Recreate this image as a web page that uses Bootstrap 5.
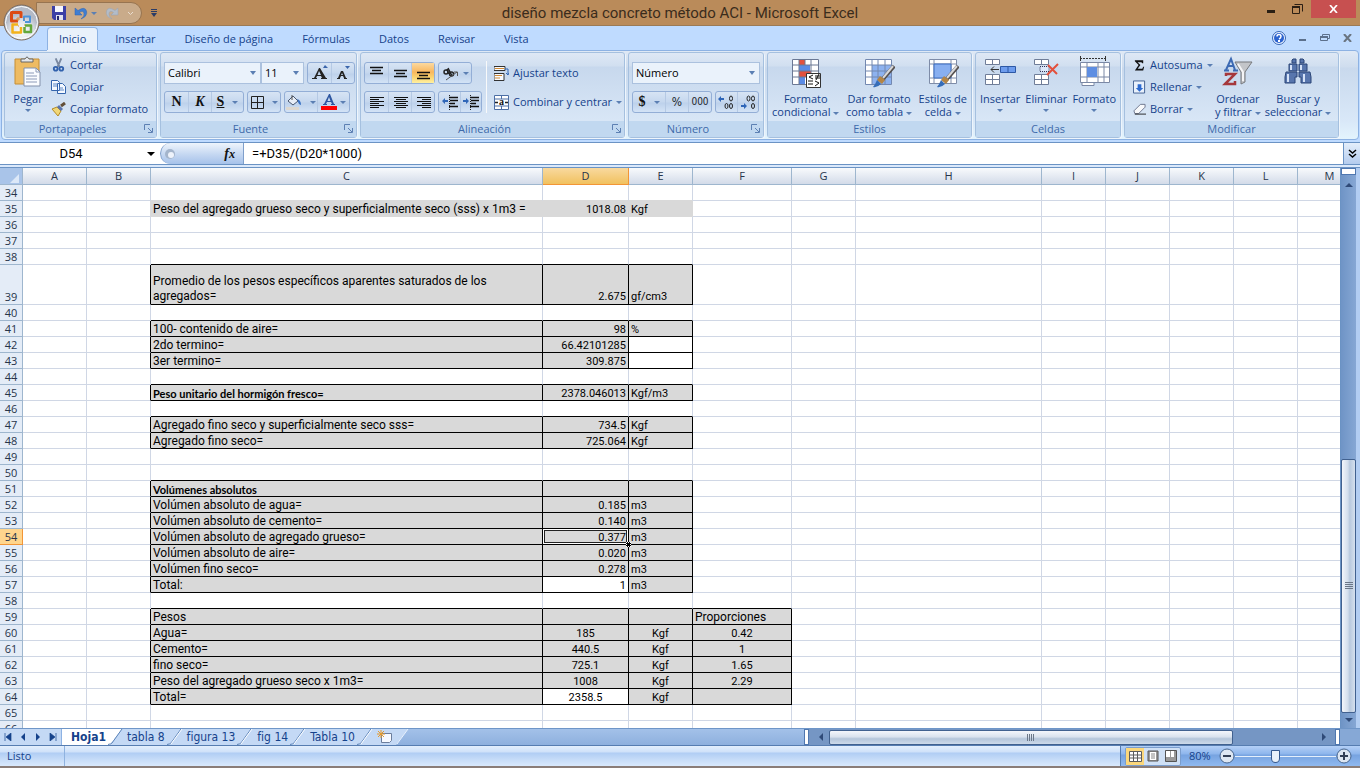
<!DOCTYPE html>
<html lang="es">
<head>
<meta charset="utf-8">
<meta name="viewport" content="width=device-width, initial-scale=1">
<title>diseño mezcla concreto método ACI - Microsoft Excel</title>
<link href="https://cdn.jsdelivr.net/npm/bootstrap@5.3.0/dist/css/bootstrap.min.css" rel="stylesheet">
<style>
:root{--ink:#15428b;--edge:#8db2e3;--line:#d0d7e5}
body{font:11px/14px "Open Sans","Noto Sans",sans-serif;color:var(--ink);background:#bfdbff;height:100vh;overflow:hidden}
button,select,input{font:inherit;color:inherit;border:0;padding:0;background:none}
svg{display:block;flex:none}
/* title bar */
.titlebar{height:26px;background:#ba8b5a;border-bottom:1px solid #9b7a55;color:#33261a}
.titlebar h1{font:15px/26px Roboto,sans-serif;color:#3a2c1c}
.quick{height:22px;width:106px;margin:2px 0 0 36px;padding-left:15px;background:#c9ab8a;border:1px solid #977450;border-radius:0 11px 11px 0}
.orb{left:3px;top:4px;z-index:5}
.winbtn{width:27px;height:18px}
.winclose{width:45px;background:#c75050}
/* tabs */
.ribtabs{height:24px;padding-left:47px;gap:5px}
.ribtabs button{padding:0 12px;height:23px;margin-top:1px}
.ribtabs button.active{background:#e9f1fb;border:1px solid var(--edge);border-bottom:0;border-radius:4px 4px 0 0;padding:0 11px;box-shadow:0 1px #e9f1fb;position:relative}
.docbtns{gap:13px}
/* ribbon */
.ribbon{height:90px;margin:0 1px;padding:1px 2px;gap:3px;border:1px solid var(--edge);border-radius:4px;background:linear-gradient(#dfe9f5,#cfddee 16px,#c9d9ed 17px,#d9e8f8 70px,#e3f4fd)}
.ribgroup{border:1px solid #a5c0df;border-radius:3px;box-shadow:1px 1px #eef5fc;background:linear-gradient(#dee8f5,#d1dff0 13px,#c7d8ed 14px,#d8e6f6 67px);display:flex;flex-direction:column}
.ribbody{flex:1;display:flex;min-height:0}
.ribname{height:16px;line-height:16px;background:#c1d8f0;color:#3e6aaa;text-align:center;position:relative;padding-right:16px}
.ribname svg{position:absolute;right:3px;top:3px}
.ribname.plain{padding-right:0}
.g-clip{width:153px}.g-font{width:197px}.g-align{width:265px}.g-num{width:136px}.g-style{width:205px}.g-cell{width:146px}.g-edit{width:215px}
.big{display:flex;flex-direction:column;align-items:center;padding-top:3px;line-height:13px;white-space:nowrap}
.big svg{margin-bottom:4px}
.stack{display:flex;flex-direction:column;padding-top:1px}
.stack button{height:22px;display:flex;align-items:center;gap:4px;white-space:nowrap}
.caret{display:inline-block;border:3px solid transparent;border-top-color:#5b7fb3;border-bottom:0;width:0;height:0;vertical-align:middle;margin-left:3px;flex:none}
.rows{display:flex;flex-direction:column;gap:7px;padding:9px 0 0 3px}
.tools{display:flex;gap:3px}
.set{display:flex;height:22px;border:1px solid #93aed6;border-radius:3px;background:linear-gradient(#d7e4f4,#c5d7ee 10px,#bdd1eb 11px,#d3e3f6)}
.set button{display:flex;align-items:center;justify-content:center;width:23px;border-left:1px solid #b5c9e4}
.set button:first-child{border-left:0}
.set .slim{width:21px}
.set .wide{width:32px}
.set .on{background:linear-gradient(#fbd9a0,#f8b75e 9px,#fbd36f 14px,#fff0a0)}
.combo{height:22px;background:#eaf2fb url("data:image/svg+xml,%3Csvg xmlns='http://www.w3.org/2000/svg' width='6' height='4'%3E%3Cpath d='M0 0h6L3 4z' fill='%235b7fb3'/%3E%3C/svg%3E") no-repeat right 4px center;border:1px solid #abc1de;appearance:none;color:#000;padding:0 3px}
.glyph{font:bold 14px/14px "Liberation Serif",serif;color:#111}
#fontsel{width:97px}#sizesel{width:43px}#numsel{width:128px}
.wraprow{height:22px;gap:4px;white-space:nowrap}
.pct{font:12px/14px "DejaVu Sans Condensed",sans-serif}
.zeros{font:10px/14px "DejaVu Sans Condensed",sans-serif}
.editcol{width:86px}
/* formula bar */
.fbar{height:23px;margin-top:2px;background:#fff;border:1px solid #6b93c4;border-width:1px 0;color:#000;font:13px/20px Roboto,sans-serif}
.namebox{width:142px;text-align:center}
.fxpart{width:84px;border-radius:11px 0 0 11px;background:linear-gradient(#eef4fc,#c3d6f1 12px,#a6c2ea);border:1px solid #7f9fcb;border-width:0 1px 0 1px}
.expand{width:17px;background:linear-gradient(#e4eefb,#b4ccee);border-left:1px solid #6b93c4}
.gapline{height:3px;background:#dbe9fb;border-bottom:1px solid #6b93c4}
/* grid */
.sheet{background:#fff;overflow:hidden;min-height:0;min-width:0}
.grid{table-layout:fixed;width:1362px;border-collapse:separate;border-spacing:0;color:#000;font:12px/15px Roboto,sans-serif}
.grid td,.grid th{height:16px;padding:0 2px;border-right:1px solid var(--line);border-bottom:1px solid var(--line);vertical-align:bottom;overflow:hidden}
.grid td{line-height:13px}
.grid tr.high td{line-height:15px}
.grid thead th{font:11px/16px "Open Sans",sans-serif;height:17px;text-align:center;color:#27344a;background:linear-gradient(#f8fafc,#d3dbe9);border-color:#9eb6ce}
.grid tbody th{font:11px/15px "Open Sans",sans-serif;text-align:center;padding:0;color:#27344a;background:#e4ecf7;border-color:#9eb6ce}
.grid thead th.hot{background:linear-gradient(#f9d99f,#f1c15f);border-color:#f29536}
.grid tbody th.hot{background:#ffd58d;border-color:#f29536}
.grid .corner{background:#a9c4e9}
.grid .tall{height:40px}
.grid .fill{background:#d9d9d9}
.grid .rk{border-right-color:#000}.grid .bk{border-bottom-color:#000}
.grid .rf{border-right-color:#d9d9d9}.grid .bf{border-bottom-color:#d9d9d9}
.grid .num{text-align:right;font-size:11px}
.grid .unit{font-size:11px}
.grid .mid{text-align:center;font-size:11px}
.grid .head{font:bold 11px/13px Lato,sans-serif}
.grid .cursor{box-shadow:inset 0 0 0 1px #fff,inset 0 0 0 2px #222;overflow:visible;position:relative}
.cursor i{position:absolute;right:-3px;bottom:-3px;width:5px;height:5px;background:#000;border:1px dotted #fff;z-index:2}
/* scroll bars */
.vscroll{width:20px;border-left:1px solid #6b93c4;border-right:4px solid #b2cdf2;background:linear-gradient(90deg,#6f94c6,#86a7d4)}
.thumbv{border:1px solid #41618f;border-radius:2px;background:linear-gradient(90deg,#f3f6fb,#d3deec 45%,#b8c9de 60%,#d5e0ee)}
.splitbox{background:#fff;border:1px solid #4f77b0}
.splitbox.top{height:7px}
.splitbox.side{width:5px}
.bottombar{height:17px;border-top:1px solid #6f96c8;background:#86a8d6}
.sheettabs{background:linear-gradient(#a3c1e9,#8eb0de);font:12px/16px "DejaVu Sans Condensed","DejaVu Sans",sans-serif}
.sheettabs button{white-space:nowrap;padding:0 1px;background:#c4d9f5;height:16px}
.sheettabs button.active{background:#fff;font-weight:bold;padding-left:9px}
.navs{width:62px;background:#c4d9f5;border-right:1px solid #8db2e3}
.hscroll{width:536px;background:#7596c4}
.thumbh{flex:404;height:15px;border:1px solid #41618f;border-radius:2px;background:linear-gradient(#f3f6fb,#d9e2ee 45%,#b4c5da 60%,#cddaea)}
.rest{flex:85}
.above{flex:269}
.thumbv{flex:257}
.corner-end{width:20px}
/* status bar */
.status{height:21px;background:linear-gradient(#e3effd,#cfe1f9 6px,#b0cdf4 7px,#c8ddf8 14px,#d9e9fd);border-top:1px solid #567db1}
.status .state{width:65px;padding-left:7px;border-right:1px solid #8fb2df}
.zoomer{width:240px;border-left:1px solid #567db1;background:linear-gradient(#b4d0f7,#8db5ec 8px,#77a3e0 9px,#8fb9f0)}
.views{border:1px solid #7a9dcd;border-radius:2px;background:#cfe0f5;height:19px}
.views button{width:18px;display:flex;align-items:center;justify-content:center}
.views .on{background:#fbd77b}
.zlabel{width:30px}
.zoomer input{appearance:none;width:101px;height:16px;background:linear-gradient(#e4effc,#e4effc) center/100% 1px no-repeat}
.zoomer input::-webkit-slider-thumb{appearance:none;width:9px;height:13px;background:#e8f0fa;border:1px solid #34588f;border-radius:1px 1px 5px 5px}
.tray{height:2px;background:#8a7d78}
</style>
</head>
<body class="d-flex flex-column position-relative">

<svg class="orb position-absolute" width="37" height="37" viewBox="0 0 37 37">
<defs><radialGradient id="ob" cy=".75"><stop offset="0" stop-color="#fff"/><stop offset=".6" stop-color="#dfe3ea"/><stop offset="1" stop-color="#b4bac6"/></radialGradient></defs>
<circle cx="18.500" cy="18.500" r="17.500" fill="url(#ob)" stroke="#7b6a5c"/><circle cx="18.500" cy="18.500" r="16" fill="none" stroke="#fff"/>
<g fill="none" stroke-linejoin="round"><path d="M15 17H8.500V8.500H18V14" stroke="#dc4a12" stroke-width="3"/><path d="M21 17v-4.500h6V18h-5" stroke="#4d93d9" stroke-width="2"/><path d="M15 20.500H9.500V28.500H18V23" stroke="#f3b21b" stroke-width="2.500"/><path d="M21.500 23v5H28v-6.500h-6" stroke="#63a83c" stroke-width="2.500"/><path d="M14 14h2v2h-2zM21 15h1M15 22h1M21 21h1" stroke="#d98a35"/></g></svg>

<header class="titlebar d-flex position-relative flex-shrink-0">
 <div class="quick d-flex align-items-center">
  <button aria-label="Guardar"><svg width="14" height="14" viewBox="0 0 14 14"><path d="M0 0h14v14H2l-2-2z" fill="#3c3fa5"/><path d="M3 0h8v6H3z" fill="#f4f6fc"/><path d="M4 9h7v5H4z" fill="#e2e2ee"/><path d="M5 10h2v4H5z" fill="#23256e"/></svg></button>
  <button class="ms-2 d-flex align-items-center" aria-label="Deshacer"><svg width="14" height="14" viewBox="0 0 14 14"><path d="M1 2v7h7L5.500 6.500Q9 4 10 7T7 13q7-3 5.500-8T4 4.500z" fill="#3f7ed2" stroke="#2d62b0" stroke-width=".5"/></svg><span class="caret"></span></button>
  <button class="ms-2 d-flex align-items-center" aria-label="Rehacer"><svg width="14" height="14" viewBox="0 0 14 14"><path d="M13 2v7H6l2.500-2.500Q5 4 4 7t3 6Q0 10 1.500 5t8.500-.5z" fill="#b3bcc8" stroke="#97a3b3" stroke-width=".5"/></svg><svg class="ms-2" width="7" height="5"><path d="m1 1 2.500 2.500L6 1" fill="none" stroke="#e9ddd0"/></svg></button>
 </div>
 <button class="ms-1" aria-label="Personalizar"><svg class="ms-1" width="8" height="8" viewBox="0 0 8 8"><path d="M1 0h6v1H1zM1 2h6v1H1zM1 4h6L4 8z" fill="#2b3c66"/></svg></button>
 <h1 class="position-absolute w-100 text-center m-0 pe-none">diseño mezcla concreto método ACI - Microsoft Excel</h1>
 <div class="ms-auto d-flex me-1 align-items-start">
  <button class="winbtn" aria-label="Minimizar"><svg class="mx-auto mt-1" width="10" height="4"><path d="M1 1h8v3H1z" fill="#2a1f14"/></svg></button>
  <button class="winbtn" aria-label="Restaurar"><svg class="mx-auto" width="11" height="10" viewBox="0 0 11 10"><path d="M.5 2.500h7v7h-7zM2.500.5h8v7" fill="none" stroke="#2a1f14"/><path d="M0 2h8v2H0z" fill="#2a1f14"/></svg></button>
  <button class="winclose winbtn" aria-label="Cerrar"><svg class="mx-auto" width="9" height="8" viewBox="0 0 9 8"><path d="m1 0 7 8M8 0 1 8" stroke="#fff" stroke-width="1.700"/></svg></button>
 </div>
</header>

<nav class="ribtabs d-flex flex-shrink-0">
 <button class="active">Inicio</button><button>Insertar</button><button>Diseño de página</button><button>Fórmulas</button><button>Datos</button><button>Revisar</button><button>Vista</button>
 <div class="docbtns ms-auto d-flex align-items-center me-1 pe-1">
  <svg width="14" height="14" viewBox="0 0 14 14"><circle cx="7" cy="7" r="6.500" fill="#eef4ff" stroke="#3566b5"/><circle cx="7" cy="7" r="5" fill="#2c63cf"/><path d="M5 5.500Q5 3.500 7 3.500T9 5.300 7 8" fill="none" stroke="#fff" stroke-width="1.500"/><path d="M6 9h2v2H6z" fill="#fff"/></svg>
  <svg width="8" height="8"><path d="M0 5h7v2H0z" fill="#5c708c"/></svg>
  <svg width="10" height="8" viewBox="0 0 10 8"><path d="M2.500 2V.5h7v4H8M.5 2.500h7v4h-7z" fill="none" stroke="#5c708c"/><path d="M0 2h8v2H0z" fill="#5c708c"/></svg>
  <svg width="9" height="8" viewBox="0 0 9 8"><path d="m1 0 7 8M8 0 1 8" stroke="#6a7480" stroke-width="2"/></svg>
 </div>
</nav>

<section class="ribbon d-flex flex-shrink-0">
 <div class="ribgroup g-clip"><div class="ribbody">
  <button class="big ps-2"><svg width="30" height="32" viewBox="0 0 30 32"><path d="M2 3h24v25H2z" fill="#eebb62" stroke="#c58e35"/><path d="M8 6V3h4q2-4 4 0h4v3z" fill="#e5e7ea" stroke="#666"/><path d="M11 12h12l4 4v14H11z" fill="#fafcff" stroke="#8391ab"/><path d="M23 12v4h4M13 17h8M13 20h11M13 23h11M13 26h11" fill="none" stroke="#8c9ab8"/></svg><span>Pegar</span><span class="caret ms-0 mt-1"></span></button>
  <div class="stack ps-2">
   <button><svg width="15" height="16" viewBox="0 0 16 16"><path d="m5 1 4 9M11 1 7 10" stroke="#7988a0" stroke-width="2"/><g fill="none" stroke="#3161ac" stroke-width="2"><circle cx="5" cy="12" r="2"/><circle cx="11" cy="12" r="2"/></g></svg>Cortar</button>
   <button><svg width="15" height="14" viewBox="0 0 15 14"><path d="M.5.5h6l2 2v8h-8zM6.500 3.500h5l3 3v7h-8z" fill="#f5f9ff" stroke="#3565ad"/><path d="M2 4h4M2 6h4M8 8h4M8 10h5" stroke="#5b86c6"/></svg>Copiar</button>
   <button><svg width="15" height="14" viewBox="0 0 15 14"><path d="m1 7 5-2 4 4-3 5z" fill="#f1d777" stroke="#b38b26"/><path d="m6 5 2-2 4 4-2 2z" fill="#5b75ad"/><path d="m10 4 4-3" stroke="#624f39" stroke-width="3"/></svg>Copiar formato</button>
  </div></div>
  <div class="ribname">Portapapeles<svg width="9" height="9" viewBox="0 0 9 9"><use href="#launch"/></svg></div>
 </div>

 <div class="ribgroup g-font"><div class="ribbody"><div class="rows">
  <div class="tools"><div class="d-flex"><select class="combo" id="fontsel" aria-label="Fuente"><option>Calibri</option></select><select class="combo" id="sizesel" aria-label="Tamaño de fuente"><option>11</option></select></div>
   <div class="set"><button aria-label="Aumentar fuente"><svg width="16" height="16" viewBox="0 0 16 16"><path d="M0 14h5v-1H4l1-2h4l1 2H9v1h6v-1h-1L8 3H7L2 13H0zM5.500 10 7 6l2 4z" fill="#222" fill-rule="evenodd"/><path d="m13 0 3 3h-5z" fill="#3a65ab"/></svg></button><button aria-label="Reducir fuente"><svg width="14" height="16" viewBox="0 0 14 16"><path d="M1 14h3v-1l1-2h2l1 2v1h3v-1h-1L7 6H5L2 13H1zM5 10l1-2 1 2z" fill="#222" fill-rule="evenodd"/><path d="M9 1h5l-2.500 3z" fill="#3a65ab"/></svg></button></div></div>
  <div class="tools">
   <div class="set"><button class="glyph">N</button><button class="glyph fst-italic">K</button><button class="glyph wide"><u>S</u><span class="caret ms-2"></span></button></div>
   <div class="set"><button class="wide" aria-label="Bordes"><svg width="13" height="13" viewBox="0 0 13 13"><path d="M.5.5h12v12H.5zM6.500 0v13M0 6.500h13" fill="none" stroke="#222"/></svg><span class="caret ms-2"></span></button></div>
   <div class="set"><button class="wide" aria-label="Color de relleno"><svg width="16" height="16" viewBox="0 0 16 16"><path d="m2 7 5-5 5 5-5 4z" fill="#e8eef7" stroke="#4a5870"/><path d="M6 6V1" stroke="#555"/><path d="M11 5q4 1 4 6-3-1-3-4z" fill="#3871c4"/><path d="M0 13h13v3H0z" fill="#ddd8d0"/></svg><span class="caret ms-2"></span></button><button class="wide" aria-label="Color de fuente"><svg width="16" height="16" viewBox="0 0 16 16"><path d="M2 11h4v-1H5l1-2h4l1 2h-1v1h4v-1h-1L9 0H8L3 10H2zM6.500 7 8 3l1.500 4z" fill="#2d56a0" fill-rule="evenodd"/><path d="M0 12h16v4H0z" fill="#f00"/></svg><span class="caret"></span></button></div>
  </div></div></div>
  <div class="ribname">Fuente<svg width="9" height="9" viewBox="0 0 9 9"><g id="launch" fill="none" stroke="#5d80b3"><path d="M.5 6V.5H6M4 4l4 4M8.500 4v4.500H4"/></g></svg></div>
 </div>

 <div class="ribgroup g-align"><div class="ribbody"><div class="rows">
  <div class="tools"><div class="set"><button aria-label="Superior"><svg width="15" height="14"><path d="M1 1.500h13M3 4.500h9M1 7.500h13" stroke="#111" stroke-width="1.500"/></svg></button><button aria-label="Medio"><svg width="15" height="14"><path d="M1 4.500h13M3 7.500h9M1 10.500h13" stroke="#111" stroke-width="1.500"/></svg></button><button class="on" aria-label="Inferior"><svg width="15" height="14"><path d="M1 6.500h13M3 9.500h9M1 12.500h13" stroke="#111" stroke-width="1.500"/></svg></button></div>
   <div class="set"><button class="wide" aria-label="Orientación"><svg width="17" height="15" viewBox="0 0 17 15"><g fill="none" stroke="#222" stroke-width="1.500"><circle cx="4" cy="6" r="2"/><path d="M5 3l1.500 5M6 2l4 8"/><circle cx="9.500" cy="8" r="2"/></g><path d="m4 14 11-8M15.500 10V6H12" fill="none" stroke="#555"/></svg><span class="caret ms-1"></span></button></div></div>
  <div class="tools"><div class="set"><button aria-label="Izquierda"><svg width="15" height="13"><path d="M1 1.500h14M1 3.500h9M1 5.500h14M1 7.500h9M1 9.500h14M1 11.500h9" stroke="#111"/></svg></button><button aria-label="Centro"><svg width="15" height="13"><path d="M1 1.500h14M3 3.500h10M1 5.500h14M3 7.500h10M1 9.500h14M3 11.500h10" stroke="#111"/></svg></button><button aria-label="Derecha"><svg width="15" height="13"><path d="M1 1.500h14M6 3.500h9M1 5.500h14M6 7.500h9M1 9.500h14M6 11.500h9" stroke="#111"/></svg></button></div>
   <div class="set"><button class="slim" aria-label="Disminuir sangría"><svg width="16" height="15" viewBox="0 0 16 15"><path d="M7.500 0v15" stroke="#222" stroke-dasharray="1 1"/><path d="M7 2.500h9M8 5.500h8M8 8.500h5M7 11.500h9" stroke="#111" stroke-width="1.500"/><path d="m0 6 3-3v2h3v2H3v2z" fill="#2f66b8"/></svg></button><button class="slim" aria-label="Aumentar sangría"><svg width="16" height="15" viewBox="0 0 16 15"><path d="M7.500 0v15" stroke="#222" stroke-dasharray="1 1"/><path d="M7 2.500h9M8 5.500h8M8 8.500h5M7 11.500h9" stroke="#111" stroke-width="1.500"/><path d="M6 6 3 3v2H0v2h3v2z" fill="#2f66b8"/></svg></button></div></div></div>
  <div class="border-start border-light ms-1 my-2"></div>
  <div class="rows"><button class="d-flex align-items-center wraprow ps-1"><svg width="15" height="15" viewBox="0 0 15 15"><path d="M0 .5h11v4H0zM0 7.500h10v7H0z" fill="#f8fbff" stroke="#333"/><path d="M1 2.500h9M1 9.500h7M1 12h5" stroke="#d28a35"/><path d="M11 3h3v5M12 7l2 2 1-2" fill="none" stroke="#2f66b8"/></svg>Ajustar texto</button>
   <button class="d-flex align-items-center wraprow ps-1"><svg width="15" height="15" viewBox="0 0 15 15"><path d="M.5.5h14v14H.5zM0 4h15M0 11h15M7.500 0v4M7.500 11v4" fill="#fff" stroke="#4c6ea5"/><path d="M1 7.500h3M14 7.500h-3" stroke="#222" stroke-width="1.500"/><text x="5" y="10" font-family="Liberation Serif" font-weight="bold" font-size="10" fill="#111">a</text></svg>Combinar y centrar<span class="caret ms-0"></span></button></div></div>
  <div class="ribname">Alineación<svg width="9" height="9" viewBox="0 0 9 9"><use href="#launch"/></svg></div>
 </div>

 <div class="ribgroup g-num"><div class="ribbody"><div class="rows">
  <select class="combo" id="numsel" aria-label="Formato de número"><option>Número</option></select>
  <div class="tools"><div class="set"><button class="glyph wide">$<span class="caret ms-2"></span></button><button class="text-dark"><span class="pct">%</span></button><button class="text-dark"><span class="zeros">000</span></button></div>
   <div class="set"><button class="slim" aria-label="Aumentar decimales"><svg width="18" height="15" viewBox="0 0 18 15"><path d="m0 4 3-3v2h3v2H3v2z" fill="#2f66b8"/><g fill="none" stroke="#222"><ellipse cx="13" cy="3.500" rx="1.500" ry="2.500"/><ellipse cx="8.500" cy="11" rx="1.500" ry="2.500"/><ellipse cx="13" cy="11" rx="1.500" ry="2.500"/></g></svg></button><button class="slim" aria-label="Disminuir decimales"><svg width="18" height="15" viewBox="0 0 18 15"><path d="M8 11 5 8v2H2v2h3v2z" fill="#2f66b8"/><g fill="none" stroke="#222"><ellipse cx="9.500" cy="3.500" rx="1.500" ry="2.500"/><ellipse cx="14" cy="3.500" rx="1.500" ry="2.500"/><ellipse cx="14" cy="11" rx="1.500" ry="2.500"/></g></svg></button></div></div></div></div>
  <div class="ribname">Número<svg width="9" height="9" viewBox="0 0 9 9"><use href="#launch"/></svg></div>
 </div>

 <div class="ribgroup g-style"><div class="ribbody justify-content-between px-1">
  <button class="big"><svg width="32" height="32" viewBox="0 0 32 32"><path d="M2 3h27v25H2z" fill="#fff"/><path d="M9 3h6v6H9zM9 15h12v6H9z" fill="#e2513f"/><path d="M9 9h11v6H9zM9 21h6v7H9z" fill="#5a8be6"/><path d="M2.500 3.500h26v25h-26zM2 9h27M2 15h27M2 21h27M9 3v25M15 3v6M21 3v25" fill="none" stroke="#6b7894"/><path d="M16.500 17.500h14v14h-14z" fill="#fff" stroke="#333"/><path d="m23 19-4 2 4 2M18 25h5M18 28h5M25 20h5M25 22h5M29 18l-3 6M25 25l4 2-4 3" fill="none" stroke="#111"/></svg><span>Formato</span><span>condicional<span class="caret"></span></span></button>
  <button class="big"><svg width="32" height="32" viewBox="0 0 32 32"><path d="M2 3h27v25H2z" fill="#fff"/><path d="M9 9h20v19H9z" fill="#8db2ef"/><path d="M2.500 3.500h26v25h-26zM2 9h27M2 15h27M2 21h27M9 3v25M15 3v25M22 3v25" fill="none" stroke="#7388b0"/><g id="brush"><path d="M31 10 19 24" stroke="#544f4d" stroke-width="4"/><path d="M30 10 20 22" stroke="#d8d8da" stroke-width="2"/><path d="m17 20 5 4-3 4-5-4z" fill="#b48545"/><path d="m14 24 4 4q-4 4-8 3 2-2 4-7z" fill="#366db8"/></g></svg><span>Dar formato</span><span>como tabla<span class="caret"></span></span></button>
  <button class="big"><svg width="32" height="32" viewBox="0 0 32 32"><path d="M2.500 3.500h27v24h-27zM7 3v24M24 3v24M2 8h28M2 22h28" fill="#fff" stroke="#7e8ca8"/><path d="M7 8h17v14H7z" fill="#88aff0" stroke="#3b6cc0"/><use href="#brush"/></svg><span>Estilos de</span><span>celda<span class="caret"></span></span></button></div>
  <div class="ribname plain">Estilos</div>
 </div>

 <div class="ribgroup g-cell"><div class="ribbody justify-content-between px-1">
  <button class="big"><svg width="32" height="32" viewBox="0 0 32 32"><path d="M1.500 3.500h14v5h-14zM8.500 3v5M1.500 18.500h14v10h-14zM1 23.500h15M8.500 18v10" fill="#fff" stroke="#6f7d98"/><path d="M16.500 10.500h15v6h-15zM24 10v7" fill="#6d9ced" stroke="#2d58a5"/><path d="M15 13.500H7m3-3-3 3 3 3" fill="none" stroke="#333"/></svg><span>Insertar</span><span class="caret ms-0 mt-1"></span></button>
  <button class="big"><svg width="32" height="32" viewBox="0 0 32 32"><path d="M4.500 3.500h14v5h-14zM11.500 3v5M4.500 18.500h14v10h-14zM4 23.500h15M11.500 18v10" fill="#fff" stroke="#6f7d98"/><path d="M10 10.500h9v5h-9z" fill="#dce8fa" stroke="#335" stroke-dasharray="1 1"/><path d="m18 9 9 9M28 8 17 19" stroke="#e3503c" stroke-width="2"/></svg><span>Eliminar</span><span class="caret ms-0 mt-1"></span></button>
  <button class="big"><svg width="32" height="32" viewBox="0 0 32 32"><path d="M2 2.500h26M2.500 0v5M27.500 0v5" stroke="#333" stroke-dasharray="2 1"/><path d="M2.500 6.500h29v20h-29zM2 11h30M2 21h30M9 6v20M20 6v20M26 6v20M4 26.500v3h12v-3" fill="#fff" stroke="#7a88a5"/><path d="M9 11h10v10H9z" fill="#5e8ee2"/></svg><span>Formato</span><span class="caret ms-0 mt-1"></span></button></div>
  <div class="ribname plain">Celdas</div>
 </div>

 <div class="ribgroup g-edit"><div class="ribbody">
  <div class="stack ps-2 editcol">
   <button><svg width="13" height="14" viewBox="0 0 14 14"><path d="M2 2h9v3h-1L9 4H5l3 3-3 4h5l1-2h1l-1 4H2l4-6-4-4z" fill="#111"/></svg>Autosuma<span class="caret ms-0"></span></button>
   <button><svg width="13" height="14" viewBox="0 0 14 14"><path d="M.5.5h12v13H.5z" fill="#e9f1fc" stroke="#3c5c90"/><path d="M5 4h4v4h2l-4 4-4-4h2z" fill="#2d6bd0"/></svg>Rellenar<span class="caret ms-0"></span></button>
   <button><svg width="13" height="14" viewBox="0 0 14 14"><path d="m1 9 7-7h5v3l-7 7H2z" fill="#f8f9fb" stroke="#68718a"/><path d="M2 12.500h12" stroke="#222"/></svg>Borrar<span class="caret ms-0"></span></button></div>
  <button class="big ms-1"><svg width="32" height="32" viewBox="0 0 32 32"><g fill="none"><path d="m4 14 5-11 4 11M6 10h6M2 14.500h5M11 14.500h5" stroke="#3d6ab3" stroke-width="2"/><path d="M4 20v-2h9L3 28h10v-3" stroke="#a5373b" stroke-width="2.500"/></g><path d="M13 6h17l-7 10v10l-4 2V16z" fill="#c3c5c9" stroke="#77797d"/><path d="m16 8 5 8v9" fill="none" stroke="#f4f4f6" stroke-width="2"/></svg><span>Ordenar</span><span>y filtrar<span class="caret"></span></span></button>
  <button class="big ms-1"><svg width="32" height="32" viewBox="0 0 32 32"><g fill="#5876ad" stroke="#2b4577"><path d="M11 3h3v4h-4V4zM18 3h3l1 1v3h-4zM7 8h8v7H7zM17 8h8v7h-8zM4 16h11v5h-2v6H3v-6zM17 16h11l1 5v6H19v-6h-2z"/></g><path d="M6 18v8M9 9v5M19 9v5M22 18v8" stroke="#d5e2f7" stroke-width="2"/></svg><span>Buscar y</span><span>seleccionar<span class="caret"></span></span></button></div>
  <div class="ribname plain">Modificar</div>
 </div>
</section>

<div class="fbar d-flex flex-shrink-0">
 <input class="namebox" value="D54" aria-label="Cuadro de nombres">
 <button class="px-1" aria-label="Lista de nombres"><svg width="10" height="6" viewBox="0 0 10 6"><path d="M1 1h8L5 5z" fill="#000"/></svg></button>
 <div class="fxpart d-flex align-items-center justify-content-between px-1"><svg width="12" height="12"><circle cx="5" cy="6" r="5" fill="#a4b5cc"/><circle cx="6" cy="7" r="3" fill="#eef3fb"/></svg><button class="glyph fst-italic pe-1" aria-label="Insertar función">f<small>x</small></button></div>
 <input class="flex-fill ps-2" value="=+D35/(D20*1000)" aria-label="Barra de fórmulas">
 <button class="expand" aria-label="Expandir"><svg class="mx-auto" width="9" height="10" viewBox="0 0 9 10"><path d="m1 1 3.500 3L8 1M1 5l3.500 3L8 5" fill="none" stroke="#000" stroke-width="1.500"/></svg></button>
</div>
<div class="gapline flex-shrink-0"></div>

<main class="d-flex flex-fill overflow-hidden">
 <div class="sheet flex-fill"><table class="grid" id="grid"></table></div>
 <div class="vscroll d-flex flex-column align-items-stretch flex-shrink-0">
  <div class="splitbox top"></div>
  <svg class="mx-auto my-1" width="10" height="12"><path d="m1 8 4-4 4 4z" fill="#2f4a78"/></svg>
  <div class="above"></div>
  <div class="thumbv d-flex align-items-center justify-content-center"><svg width="8" height="8"><path d="M0 .5h8M0 2.500h8M0 4.500h8M0 6.500h8" stroke="#6b7788"/></svg></div>
  <svg class="mx-auto my-1" width="10" height="7"><path d="M1 1h8L5 5z" fill="#2f4a78"/></svg>
 </div>
</main>

<div class="bottombar d-flex flex-shrink-0">
 <div class="sheettabs d-flex flex-fill">
  <div class="navs d-flex justify-content-around align-items-center"><svg width="8" height="8"><path d="M1 0v8M7 0v8L2 4z" fill="#15428b" stroke="#15428b" stroke-width=".7"/></svg><svg width="6" height="8"><path d="M5 0v8L1 4z" fill="#15428b"/></svg><svg width="6" height="8"><path d="M1 0v8l4-4z" fill="#15428b"/></svg><svg width="8" height="8"><path d="M7 0v8M1 0v8l5-4z" fill="#15428b" stroke="#15428b" stroke-width=".7"/></svg></div>
  <button class="active">Hoja1</button><svg width="19" height="16"><path d="M0 0h15L3 16H0z" fill="#fff"/><path d="M15 0h4v16H3z" fill="#c4d9f5"/><path d="M15 0 5 14q-1 1-4 1.500" fill="none" stroke="#5d84b8"/></svg>
  <button>tabla 8</button><svg width="20" height="16"><use href="#slant"/></svg>
  <button>figura 13</button><svg width="20" height="16"><g id="slant"><path d="M0 0h20v16H0z" fill="#c4d9f5"/><path d="M15 0 5 14q-1 1-4 1.500" fill="none" stroke="#5d84b8"/><path d="M16 0 5 15" stroke="#fff"/></g></svg>
  <button>fig 14</button><svg width="20" height="16"><use href="#slant"/></svg>
  <button>Tabla 10</button><svg width="20" height="16"><use href="#slant"/></svg>
  <button aria-label="Insertar hoja"><svg width="15" height="14" viewBox="0 0 15 14"><path d="M4.500 3.500h10v7l-2 2h-8z" fill="#f6f9ff" stroke="#6b7d9c"/><path d="M4 0v8M0 4h8M1 1l6 6M7 1 1 7" stroke="#e69a2b"/></svg></button><svg width="16" height="16"><path d="M0 0h15L3 16H0z" fill="#c4d9f5"/><path d="M15 0 4 15" stroke="#e8f1fc"/></svg>
 </div>
 <div class="hscroll d-flex align-items-center">
  <div class="splitbox side h-100"></div>
  <svg class="ms-2 me-1" width="8" height="10"><path d="M6 1v8L2 5z" fill="#2f4a78"/></svg>
  <div class="thumbh d-flex align-items-center justify-content-center"><svg width="8" height="7"><path d="M.5 0v7M2.500 0v7M4.500 0v7M6.500 0v7" stroke="#6b7788"/></svg></div>
  <div class="rest"></div>
  <svg class="ms-1 me-2" width="6" height="10"><path d="M1 1v8l4-4z" fill="#2f4a78"/></svg>
  <div class="splitbox side h-100"></div>
 </div>
 <div class="corner-end"></div>
</div>

<footer class="status d-flex flex-shrink-0 align-items-stretch">
 <div class="state d-flex align-items-center">Listo</div>
 <div class="flex-fill"></div>
 <div class="zoomer d-flex align-items-center ps-1">
  <div class="views d-flex"><button class="on" aria-label="Normal"><svg width="13" height="11"><path d="M.5.5h12v10H.5zM0 4h13M0 7h13M4.500 0v11M8.500 0v11" fill="#fff" stroke="#5c5c5c"/></svg></button><button aria-label="Diseño de página"><svg width="12" height="12"><path d="M1 1h10v10H1z" fill="#999" stroke="#555"/><path d="M3 2h6v8H3z" fill="#fff"/><path d="M4 4h4M4 6h4M4 8h4" stroke="#888"/></svg></button><button aria-label="Salto de página"><svg width="12" height="12"><path d="M.5.5h11v11H.5z" fill="#999" stroke="#555"/><path d="M1 1h4v6H1zM6 1h3v6H6z" fill="#fff"/></svg></button></div>
  <span class="ms-2 zlabel">80%</span>
  <button aria-label="Alejar"><svg width="16" height="16"><circle cx="8" cy="8" r="7" fill="#dde6f2" stroke="#46658f"/><path d="M4 8h8" stroke="#333f55" stroke-width="2"/></svg></button>
  <input type="range" min="0" max="100" value="39" aria-label="Zoom">
  <button aria-label="Acercar"><svg width="16" height="16"><circle cx="8" cy="8" r="7" fill="#dde6f2" stroke="#46658f"/><path d="M4 8h8M8 4v8" stroke="#333f55" stroke-width="2"/></svg></button>
 </div>
</footer>
<div class="tray flex-shrink-0"></div>

<script>
// Column letters with widths in pixels, and the rows on view.
const cols = {A:64,B:64,C:392,D:86,E:64,F:99,G:64,H:186,I:64,J:64,K:64,L:64,M:64};
const names = Object.keys(cols);
// f: fill, k: black edges, n: number, u: unit, m: centred, h: bold, c: cursor
const cells = {};
const put = (row, ...list) => list.forEach(([col, text, kind]) => cells[col + row] = {text, kind});
put(35,['C','Peso del agregado grueso seco y superficialmente seco (sss) x 1m3 =','f'],['D','1018.08','fn'],['E','Kgf','fu']);
put(39,['C','Promedio de los pesos específicos aparentes saturados de los agregados=','fk'],['D','2.675','fkn'],['E','gf/cm3','fku']);
put(41,['C','100- contenido de aire=','fk'],['D','98','fkn'],['E','%','fku']);
put(42,['C','2do termino=','fk'],['D','66.42101285','fkn'],['E','','k']);
put(43,['C','3er termino=','fk'],['D','309.875','fkn'],['E','','k']);
put(45,['C','Peso unitario del hormigón fresco=','fkh'],['D','2378.046013','fkn'],['E','Kgf/m3','fku']);
put(47,['C','Agregado fino seco y superficialmente seco sss=','fk'],['D','734.5','fkn'],['E','Kgf','fku']);
put(48,['C','Agregado fino seco=','fk'],['D','725.064','fkn'],['E','Kgf','fku']);
put(51,['C','Volúmenes absolutos','fkh'],['D','','fk'],['E','','fk']);
put(52,['C','Volúmen absoluto de agua=','fk'],['D','0.185','fkn'],['E','m3','fku']);
put(53,['C','Volúmen absoluto de cemento=','fk'],['D','0.140','fkn'],['E','m3','fku']);
put(54,['C','Volúmen absoluto de agregado grueso=','fk'],['D','0.377','fknc'],['E','m3','fku']);
put(55,['C','Volúmen absoluto de aire=','fk'],['D','0.020','fkn'],['E','m3','fku']);
put(56,['C','Volúmen fino seco=','fk'],['D','0.278','fkn'],['E','m3','fku']);
put(57,['C','Total:','fk'],['D','1','kn'],['E','m3','fku']);
put(59,['C','Pesos','fk'],['D','','fk'],['E','','fk'],['F','Proporciones','fk']);
put(60,['C','Agua=','fk'],['D','185','fkm'],['E','Kgf','fkm'],['F','0.42','fkm']);
put(61,['C','Cemento=','fk'],['D','440.5','fkm'],['E','Kgf','fkm'],['F','1','fkm']);
put(62,['C','fino seco=','fk'],['D','725.1','fkm'],['E','Kgf','fkm'],['F','1.65','fkm']);
put(63,['C','Peso del agregado grueso seco x 1m3=','fk'],['D','1008','fkm'],['E','Kgf','fkm'],['F','2.29','fkm']);
put(64,['C','Total=','fk'],['D','2358.5','km'],['E','Kgf','fkm'],['F','','fk']);

const has = (key, flag) => !!cells[key] && cells[key].kind.includes(flag);
const cls = {f:'fill', n:'num', u:'unit', m:'mid', h:'head', c:'cursor'};
let html = '<colgroup><col style="width:23px">' + names.map(n => `<col style="width:${cols[n]}px">`).join('') + '</colgroup>';
html += '<thead><tr><th class="corner"><svg width="20" height="14"><path d="M17 4v9H8z" fill="#dce8f8"/></svg></th>' +
  names.map(n => `<th class="${n === 'D' ? 'hot' : ''}">${n}</th>`).join('') + '</tr></thead><tbody>';
for (let r = 34; r <= 66; r++) {
  html += `<tr class="${r === 39 ? 'high' : ''}"><th class="${r === 54 ? 'hot' : ''}${r === 39 ? ' tall' : ''}">${r}</th>`;
  names.forEach((n, i) => {
    const me = n + r, right = (names[i + 1] || '') + r, below = n + (r + 1), list = [];
    const cell = cells[me] || {text:'', kind:''};
    for (const k of cell.kind) if (cls[k]) list.push(cls[k]);
    if (has(me,'k') || has(right,'k')) list.push('rk'); else if (has(me,'f') || has(right,'f')) list.push('rf');
    if (has(me,'k') || has(below,'k')) list.push('bk'); else if (has(me,'f') || has(below,'f')) list.push('bf');
    html += `<td class="${list.join(' ')}">${cell.text}${cell.kind.includes('c') ? '<i></i>' : ''}</td>`;
  });
  html += '</tr>';
}
document.getElementById('grid').innerHTML = html + '</tbody>';
</script>
<script src="https://cdn.jsdelivr.net/npm/bootstrap@5.3.0/dist/js/bootstrap.bundle.min.js"></script>
</body>
</html>
